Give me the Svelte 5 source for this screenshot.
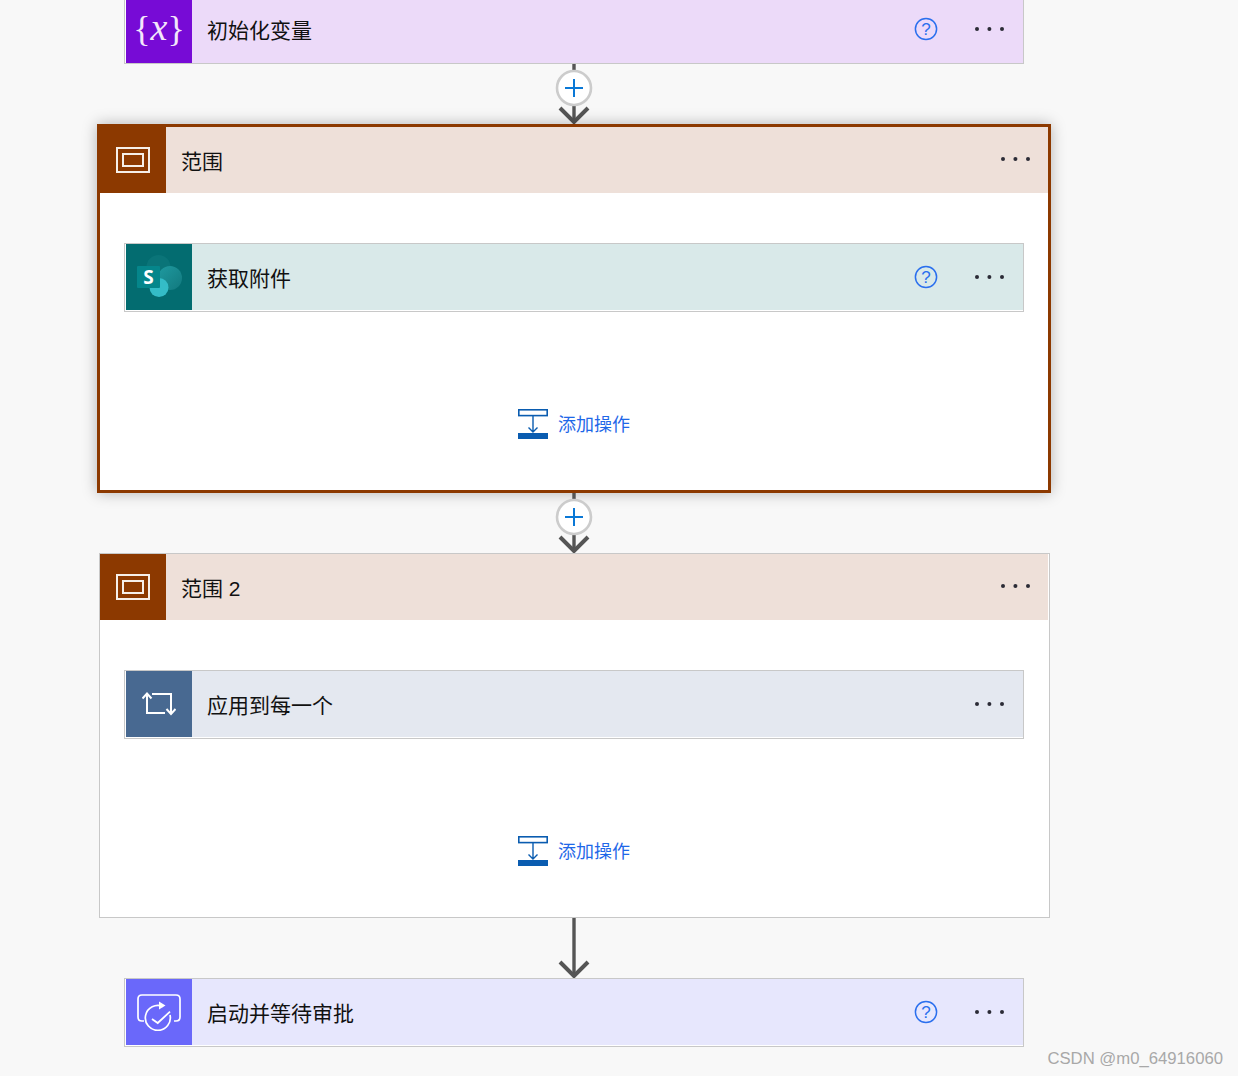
<script>
</script>

{#snippet dots()}
  <svg class="dots" width="32" height="6" viewBox="0 0 32 6" aria-hidden="true">
    <circle cx="3" cy="3" r="2" />
    <circle cx="15.4" cy="3" r="2" />
    <circle cx="28" cy="3" r="2" />
  </svg>
{/snippet}

{#snippet help()}
  <svg class="help" width="24" height="24" viewBox="0 0 24 24" aria-hidden="true">
    <circle cx="12" cy="12" r="10.6" fill="none" stroke="#2a6fee" stroke-width="1.5" />
    <text x="12" y="18" text-anchor="middle">?</text>
  </svg>
{/snippet}

{#snippet connector(plus)}
  <svg class="connector" width="40" height="60" viewBox="0 0 40 60" aria-hidden="true">
    <path d="M20 0V58" stroke="#555" stroke-width="3.4" fill="none" />
    <path d="M6 44L20 58L34 44" stroke="#555" stroke-width="4" fill="none" />
    {#if plus}
      <circle cx="20" cy="24" r="17" fill="#fff" stroke="#ccc" stroke-width="2.6" />
      <path d="M11 24H29M20 15V33" stroke="#0a78d6" stroke-width="2" fill="none" />
    {/if}
  </svg>
{/snippet}

{#snippet scopeIcon()}
  <svg width="34" height="26" viewBox="0 0 34 26" aria-hidden="true">
    <rect x="1" y="1" width="32" height="24" fill="none" stroke="#f6efe9" stroke-width="2" />
    <rect x="7" y="7" width="20" height="12" fill="none" stroke="#f6efe9" stroke-width="2" />
  </svg>
{/snippet}

{#snippet addAction()}
  <div class="add">
    <svg width="30" height="30" viewBox="0 0 30 30" aria-hidden="true">
      <rect x="0.8" y="0.8" width="28.4" height="5.8" fill="#fff" stroke="#0a5cb0" stroke-width="1.6" />
      <path d="M15 7V23M10.5 18.5L15 23L19.5 18.5" fill="none" stroke="#0a5cb0" stroke-width="1.4" />
      <rect x="0" y="24" width="30" height="6" fill="#0a5cb0" />
    </svg>
    <span>添加操作</span>
  </div>
{/snippet}

<div class="canvas">
  <div class="flow">
    <div class="card variable">
      <div class="icon">
        <span class="brace">{"{"}</span><span class="var">x</span><span class="brace">{"}"}</span>
      </div>
      <div class="title">初始化变量</div>
      {@render help()}
      {@render dots()}
    </div>

    {@render connector(true)}

    <section class="scope selected">
      <header class="scope-head">
        <div class="icon">{@render scopeIcon()}</div>
        <div class="title">范围</div>
        {@render dots()}
      </header>
      <div class="scope-body">
        <div class="card sharepoint">
          <div class="icon">
            <svg width="66" height="66" viewBox="0 0 66 66" aria-hidden="true">
              <defs>
                <linearGradient id="sp-right" x1="0" y1="0" x2="1" y2="1">
                  <stop offset="0" stop-color="#1f9aa0" />
                  <stop offset="1" stop-color="#12797e" />
                </linearGradient>
              </defs>
              <circle cx="32.5" cy="23" r="12" fill="#0a7478" />
              <circle cx="44" cy="34" r="12" fill="url(#sp-right)" />
              <circle cx="33" cy="43.5" r="9.5" fill="#34bcc7" />
              <rect x="11" y="22" width="23" height="22" rx="1" fill="#05868b" />
              <text x="22.5" y="39.5" text-anchor="middle">S</text>
            </svg>
          </div>
          <div class="title">获取附件</div>
          {@render help()}
          {@render dots()}
        </div>
        {@render addAction()}
      </div>
    </section>

    {@render connector(true)}

    <section class="scope plain">
      <header class="scope-head">
        <div class="icon">{@render scopeIcon()}</div>
        <div class="title">范围 2</div>
        {@render dots()}
      </header>
      <div class="scope-body">
        <div class="card foreach">
          <div class="icon">
            <svg width="34" height="26" viewBox="0 0 34 26" aria-hidden="true">
              <path d="M0.5 7.5L5 2.5L9.5 7.5M5 3V22H23" fill="none" stroke="#fff" stroke-width="2" />
              <path d="M10 3H29V23M24.5 18L29 23L33.5 18" fill="none" stroke="#fff" stroke-width="2" />
            </svg>
          </div>
          <div class="title">应用到每一个</div>
          <span class="spacer"></span>
          {@render dots()}
        </div>
        {@render addAction()}
      </div>
    </section>

    {@render connector(false)}

    <div class="card approval">
      <div class="icon">
        <svg width="46" height="38" viewBox="0 0 46 38" aria-hidden="true">
          <path d="M8 28H6Q2 28 2 24V6Q2 2 6 2H40Q44 2 44 6V24Q44 28 40 28H38" fill="none" stroke="#fff" stroke-width="1.7" />
          <path d="M27 13.5A12.5 12.5 0 1 0 34 22" fill="none" stroke="#fff" stroke-width="1.7" />
          <path d="M23 8.5L29.5 12.5L23 16.5Z" fill="#fff" />
          <path d="M16 26L21.7 30L34 18.7" fill="none" stroke="#fff" stroke-width="1.8" />
        </svg>
      </div>
      <div class="title">启动并等待审批</div>
      {@render help()}
      {@render dots()}
    </div>
  </div>

  <div class="watermark">CSDN @m0_64916060</div>
</div>

<style>
  :global(body) {
    background: #f8f8f8;
  }

  .canvas {
    position: relative;
    height: 1076px;
    overflow: hidden;
    font-family: "Liberation Sans", "Noto Sans CJK SC", sans-serif;
  }

  .flow {
    width: 1148px;
    margin-top: -5px;
    display: flex;
    flex-direction: column;
    align-items: center;
  }

  .connector {
    display: block;
    flex: none;
  }

  .card {
    width: 900px;
    height: 69px;
    box-sizing: border-box;
    border: 1px solid #c8c8c8;
    padding: 0 0 1px 1px;
    box-shadow: inset 1px 0 #fff, inset 0 -1px #fff;
    display: flex;
    align-items: stretch;
    flex: none;
  }

  .icon {
    width: 66px;
    height: 66px;
    flex: none;
    display: flex;
    align-items: center;
    justify-content: center;
  }

  .title {
    flex: 1;
    display: flex;
    align-items: center;
    padding: 3px 0 0 15px;
    font-size: 21px;
    color: #111;
    line-height: 1;
  }

  .card .title {
    height: 66px;
    box-sizing: border-box;
  }

  .dots {
    align-self: center;
    margin: -1px 17px 0 12px;
    fill: #2b2b36;
    flex: none;
  }

  .help {
    align-self: center;
    margin: -1px 24px 0 0;
    flex: none;
  }

  .help text {
    font-family: "Liberation Sans", sans-serif;
    font-size: 17px;
    fill: #2a6fee;
  }

  .spacer {
    width: 49px;
    flex: none;
  }

  .variable {
    background: #ecdaf9;
    padding-bottom: 0;
    box-shadow: inset 1px 0 #fff;
  }
  .variable .icon {
    height: 67px;
    background: #770bd6;
    color: #f3e6fb;
    font-family: "Liberation Serif", serif;
  }
  .brace {
    font-size: 36px;
    line-height: 1;
    margin-top: -2px;
  }
  .var {
    font-size: 38px;
    font-style: italic;
    line-height: 1;
    margin: -6px 0 0 0;
  }

  .sharepoint {
    background: #d9e9e9;
  }
  .sharepoint .icon {
    background: #036c70;
  }
  .sharepoint .icon text {
    font-family: "Open Sans", sans-serif;
    font-weight: 700;
    font-size: 19px;
    fill: #fff;
  }

  .foreach {
    background: #e4e8f0;
  }
  .foreach .icon {
    background: #486991;
  }

  .approval {
    background: #e7e7fd;
  }
  .approval .icon {
    background: #6a68fa;
  }

  .scope {
    box-sizing: border-box;
    background: #fff;
    flex: none;
  }
  .scope.selected {
    width: 954px;
    border: 3px solid #8c3900;
    box-shadow: 0 0 14px rgba(0, 0, 0, 0.28);
  }
  .scope.plain {
    width: 951px;
    margin-left: 1px;
    border: 1px solid #c8c8c8;
  }

  .scope-head {
    display: flex;
    height: 66px;
    background: #eee0d9;
  }
  .scope.plain .scope-head {
    margin-right: 1px;
  }
  .scope-head .icon {
    background: #8c3900;
  }
  .scope-head .dots {
    margin: -2px 16px 0 12px;
  }

  .scope-body {
    padding: 50px 0 51px 24px;
    display: flex;
    flex-direction: column;
  }

  .add {
    display: flex;
    align-items: center;
    gap: 10px;
    margin: 97px 0 0 394px;
    height: 30px;
    font-size: 18px;
    color: #1f68e8;
  }
  .add svg {
    flex: none;
    display: block;
  }
  .add span {
    margin-top: -2px;
  }

  .watermark {
    position: absolute;
    right: 15px;
    top: 1048.5px;
    font-size: 16.7px;
    line-height: 20px;
    color: #a8a8a8;
  }
</style>
